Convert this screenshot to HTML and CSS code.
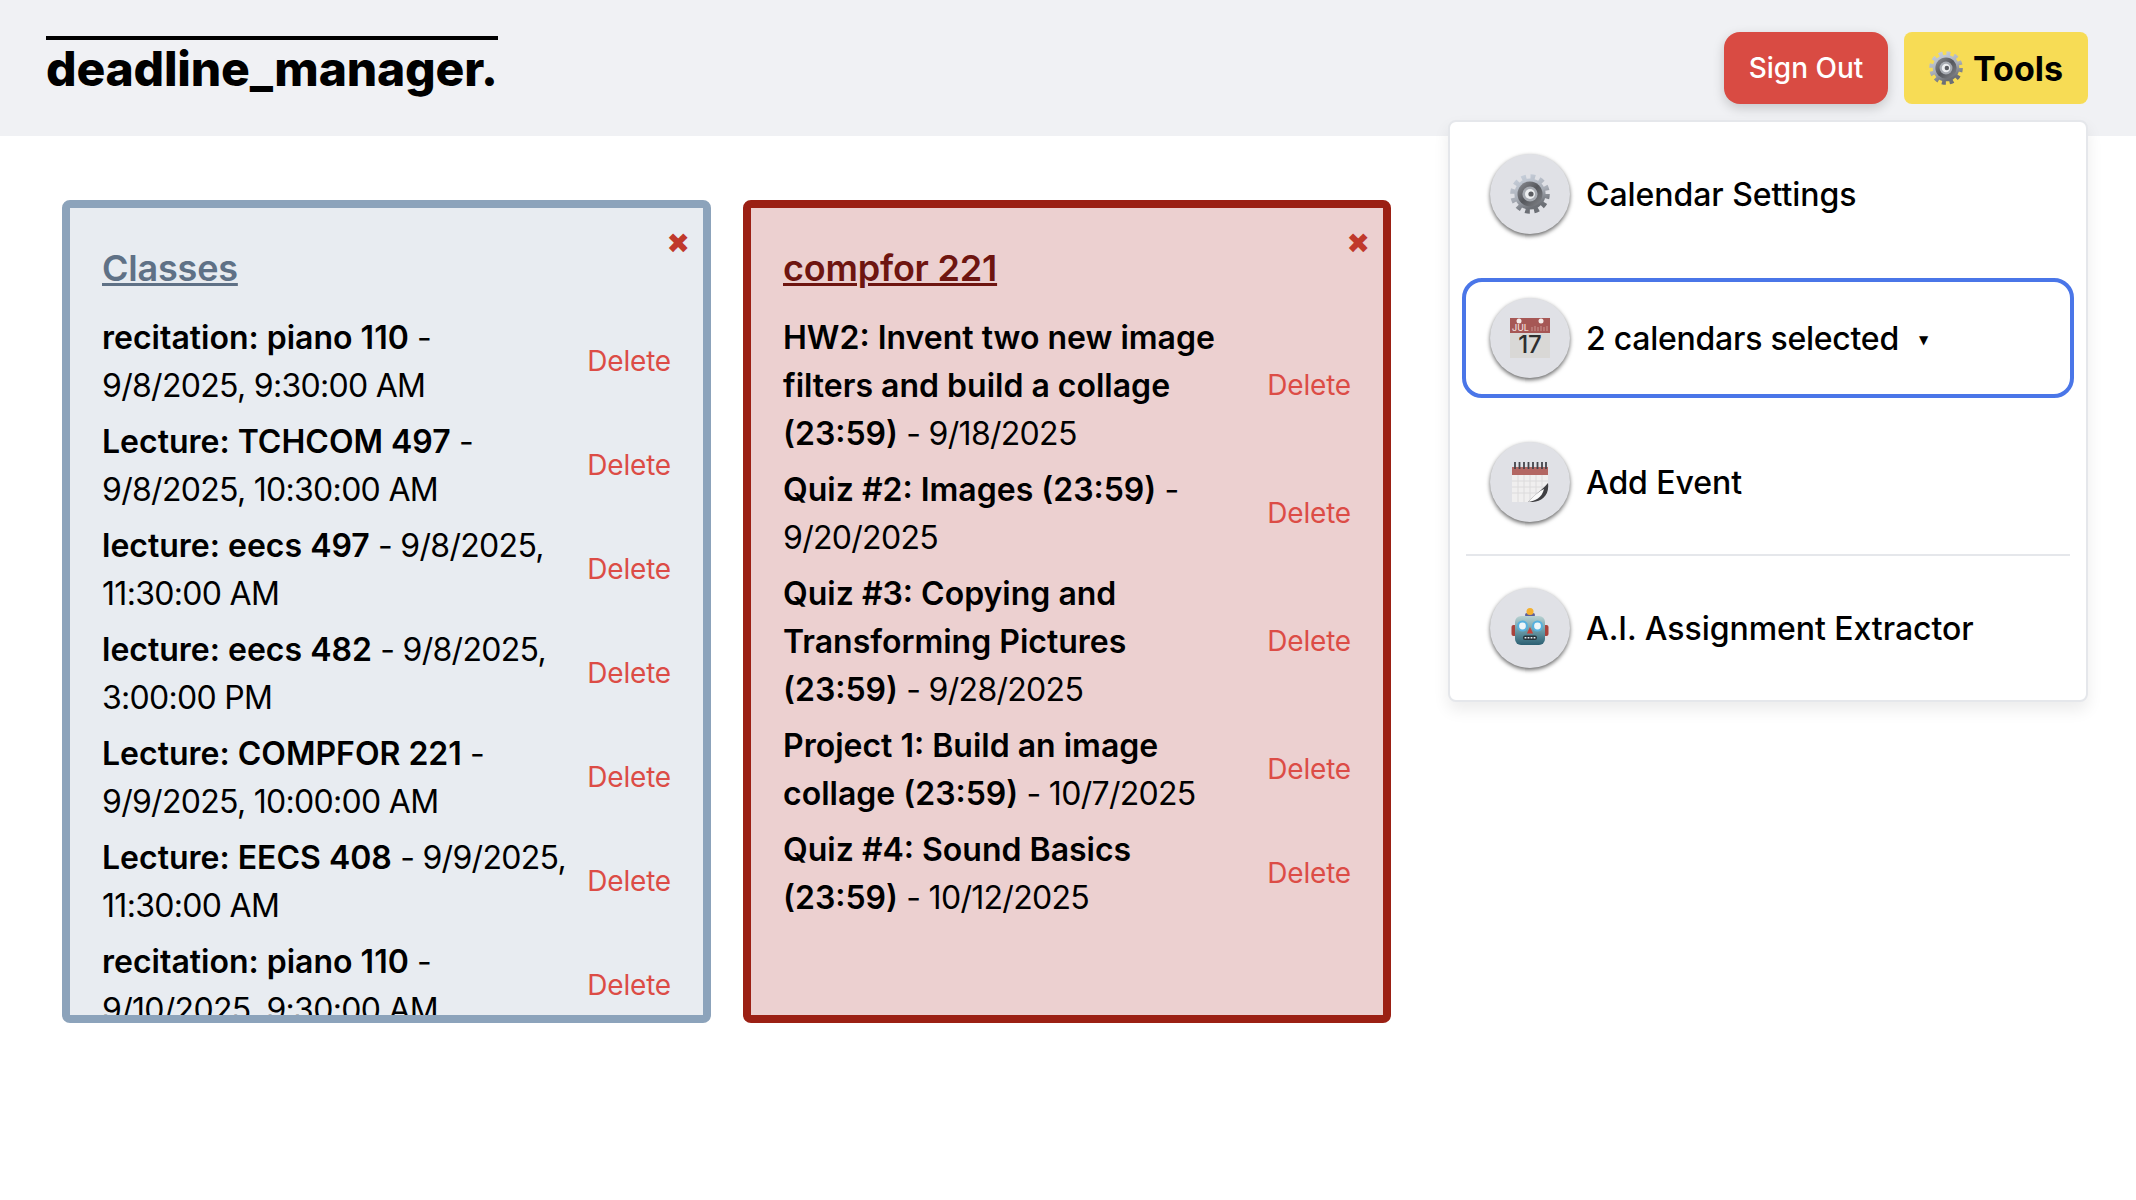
FILE: index.html
```html
<!DOCTYPE html>
<html lang="en">
<head>
    <meta charset="UTF-8">
    <title>deadline_manager.</title>
    <link rel="stylesheet" href="styles.css">
</head>
<body>
    <svg class="icon-defs" width="0" height="0" aria-hidden="true">
        <defs>
            <linearGradient id="gear-teeth" x1="0" y1="0" x2="0.4" y2="1">
                <stop offset="0" stop-color="#c9d1dd"/>
                <stop offset="0.6" stop-color="#a9aeb7"/>
                <stop offset="1" stop-color="#6c6f75"/>
            </linearGradient>
            <linearGradient id="gear-ring" x1="0" y1="0" x2="1" y2="1">
                <stop offset="0" stop-color="#8e9096"/>
                <stop offset="0.5" stop-color="#55575c"/>
                <stop offset="1" stop-color="#85878c"/>
            </linearGradient>
            <linearGradient id="robot-face" x1="0" y1="0" x2="0" y2="1">
                <stop offset="0" stop-color="#b9d2d2"/>
                <stop offset="0.5" stop-color="#6b9ca8"/>
                <stop offset="1" stop-color="#2b5f72"/>
            </linearGradient>
            <symbol id="gear" viewBox="0 0 40 40">
                <circle cx="20" cy="20" r="17" fill="none" stroke="url(#gear-teeth)" stroke-width="5.6" stroke-dasharray="4.6 4.3"/>
                <circle cx="20" cy="20" r="15.6" fill="url(#gear-teeth)"/>
                <circle cx="20" cy="20" r="12.5" fill="url(#gear-ring)"/>
                <circle cx="20" cy="20" r="7.6" fill="#a7abb2"/>
                <circle cx="20" cy="20" r="5" fill="#eceef0"/>
                <circle cx="21" cy="20" r="2.6" fill="#5a5c61"/>
            </symbol>
        </defs>
    </svg>

    <header class="top-bar">
        <h1 class="brand">deadline_manager.</h1>
        <div class="top-actions">
            <button class="btn-signout">Sign Out</button>
            <button class="btn-tools">
                <svg class="tools-gear"><use href="#gear"/></svg>
                Tools
            </button>
        </div>
    </header>

    <main class="boards">
        <section class="card card-blue">
            <span class="card-close">✖</span>
            <h2 class="card-title">Classes</h2>
            <div class="task">
                <p><b>recitation: piano 110</b> - 9/8/2025, 9:30:00 AM</p>
                <a class="task-delete">Delete</a>
            </div>
            <div class="task">
                <p><b>Lecture: TCHCOM 497</b> - 9/8/2025, 10:30:00 AM</p>
                <a class="task-delete">Delete</a>
            </div>
            <div class="task">
                <p><b>lecture: eecs 497</b> - 9/8/2025, 11:30:00 AM</p>
                <a class="task-delete">Delete</a>
            </div>
            <div class="task">
                <p><b>lecture: eecs 482</b> - 9/8/2025, 3:00:00 PM</p>
                <a class="task-delete">Delete</a>
            </div>
            <div class="task">
                <p><b>Lecture: COMPFOR 221</b> - 9/9/2025, 10:00:00 AM</p>
                <a class="task-delete">Delete</a>
            </div>
            <div class="task">
                <p><b>Lecture: EECS 408</b> - 9/9/2025, 11:30:00 AM</p>
                <a class="task-delete">Delete</a>
            </div>
            <div class="task">
                <p><b>recitation: piano 110</b> - 9/10/2025, 9:30:00 AM</p>
                <a class="task-delete">Delete</a>
            </div>
        </section>

        <section class="card card-red">
            <span class="card-close">✖</span>
            <h2 class="card-title">compfor 221</h2>
            <div class="task">
                <p><b>HW2: Invent two new image filters and build a collage (23:59)</b> - 9/18/2025</p>
                <a class="task-delete">Delete</a>
            </div>
            <div class="task">
                <p><b>Quiz #2: Images (23:59)</b> - 9/20/2025</p>
                <a class="task-delete">Delete</a>
            </div>
            <div class="task">
                <p><b>Quiz #3: Copying and Transforming Pictures (23:59)</b> - 9/28/2025</p>
                <a class="task-delete">Delete</a>
            </div>
            <div class="task">
                <p><b>Project 1: Build an image collage (23:59)</b> - 10/7/2025</p>
                <a class="task-delete">Delete</a>
            </div>
            <div class="task">
                <p><b>Quiz #4: Sound Basics (23:59)</b> - 10/12/2025</p>
                <a class="task-delete">Delete</a>
            </div>
        </section>
    </main>

    <div class="tools-menu">
        <div class="menu-row">
            <span class="menu-icon"><svg class="icon-gear"><use href="#gear"/></svg></span>
            Calendar Settings
        </div>
        <div class="menu-row menu-select">
            <span class="menu-icon">
                <svg class="icon-box" viewBox="0 0 40 40">
                    <rect x="0" y="0" width="40" height="40" fill="#d9d8d6"/>
                    <rect x="0" y="0" width="40" height="15" fill="#a65755"/>
                    <circle cx="9" cy="3" r="2.5" fill="#f4eceb"/>
                    <circle cx="31" cy="3" r="2.5" fill="#f4eceb"/>
                    <text x="2" y="13" class="cal-month">JUL</text>
                    <path d="M22 9v4M25 8v5M28 9v4M31 8v5M34 9v4M37 8v5" stroke="#bd7f7c" stroke-width="1.6"/>
                    <text x="20" y="35" text-anchor="middle" class="cal-day">17</text>
                </svg>
            </span>
            <span>2 calendars selected</span>
            <span class="select-caret">▼</span>
        </div>
        <div class="menu-row">
            <span class="menu-icon">
                <svg class="icon-box" viewBox="0 0 40 40">
                    <rect x="2" y="5" width="36" height="35" fill="#f0efef"/>
                    <rect x="2" y="5" width="36" height="8" fill="#b36763"/>
                    <path d="M5 0v7M9.500 0v7M14 0v7M18.500 0v7M23 0v7M27.500 0v7M32 0v7M36 0v7" stroke="#45454b" stroke-width="1.800"/>
                    <path d="M2 19h36M2 25h36M2 31h36M8 13v27M14 13v27M20 13v27M26 13v27M32 13v27" stroke="#dcdbdc" stroke-width="1"/>
                    <path d="M38 22V40H18Z" fill="#e0e1e6"/>
                    <path d="M38 21C35 25 27 31 18 40C28 41 40 36 38 21Z" fill="#3f3f42"/>
                    <path d="M34 27C29 29 24 34 18 40C25 39 32 36 34 27Z" fill="#fafafa"/>
                </svg>
            </span>
            Add Event
        </div>
        <div class="menu-divider"></div>
        <div class="menu-row">
            <span class="menu-icon">
                <svg class="icon-box" viewBox="0 0 40 40">
                    <rect x="1.500" y="17" width="5" height="11" rx="2" fill="#a9433c"/>
                    <rect x="33.500" y="17" width="5" height="11" rx="2" fill="#a9433c"/>
                    <rect x="15" y="5" width="10" height="4" rx="2" fill="#5b5f9b"/>
                    <circle cx="20" cy="3.500" r="3.500" fill="#f5b02e"/>
                    <rect x="5" y="8" width="30" height="29" rx="6" fill="url(#robot-face)"/>
                    <circle cx="12.500" cy="18" r="5.500" fill="#56b0de"/>
                    <circle cx="12.500" cy="18" r="3.400" fill="#eef6f8"/>
                    <circle cx="27.500" cy="18" r="5.500" fill="#56b0de"/>
                    <circle cx="27.500" cy="18" r="3.400" fill="#eef6f8"/>
                    <path d="M20 19l3.200 6.500h-6.400Z" fill="#c8433a"/>
                    <rect x="13" y="27.500" width="14" height="4.500" rx="2" fill="#26343c"/>
                    <path d="M15.500 29v1.500M18.500 29v1.500M21.500 29v1.500M24.500 29v1.500" stroke="#e9eef0" stroke-width="1.800"/>
                </svg>
            </span>
            A.I. Assignment Extractor
        </div>
    </div>
</body>
</html>
```

FILE: styles.css
```css
body {
    font-family: 'Inter', sans-serif;
    margin: 0;
    background-color: #fff;
    color: #000;
    height: 1200px;
    overflow: hidden;
    position: relative;
}

.icon-defs {
    position: absolute;
}

.top-bar {
    height: 136px;
    box-sizing: border-box;
    background-color: #f0f1f4;
    display: flex;
    justify-content: space-between;
    align-items: flex-start;
    padding: 32px 48px 0 46px;
}

.brand {
    margin: 4px 0 0;
    border-top: 4px solid #000;
    font-size: 48px;
    line-height: 58px;
    font-weight: 800;
    letter-spacing: -0.2px;
}

.top-actions {
    display: flex;
    gap: 16px;
}

.top-actions button {
    height: 72px;
    border: none;
    font-family: inherit;
    display: flex;
    align-items: center;
    justify-content: center;
}

.btn-signout {
    width: 164px;
    background-color: #d94b43;
    color: #fff;
    font-size: 28px;
    font-weight: 500;
    border-radius: 16px;
    box-shadow: 0 4px 12px rgba(0, 0, 0, 0.18);
}

.btn-tools {
    width: 184px;
    gap: 10px;
    background-color: #f7dc55;
    color: #000;
    font-size: 34px;
    font-weight: 700;
    border-radius: 8px;
}

.tools-gear {
    width: 34px;
    height: 34px;
}

.boards {
    display: flex;
    gap: 32px;
    padding: 64px 0 0 62px;
}

.card {
    position: relative;
    box-sizing: border-box;
    width: 648px;
    height: 823px;
    padding: 32px;
    border: 8px solid;
    border-radius: 8px;
    overflow: hidden;
}

.card-blue {
    width: 649px;
    background-color: #e8ecf1;
    border-color: #8ca3bb;
}

.card-blue .card-title {
    color: #5f7186;
}

.card-red {
    background-color: #ecd0d0;
    border-color: #9b2014;
}

.card-red .card-title {
    color: #6e1510;
}

.card-title {
    margin: 0 0 16px;
    font-size: 36px;
    line-height: 56px;
    font-weight: 600;
    letter-spacing: -0.2px;
    text-decoration: underline;
}

.card-close {
    position: absolute;
    top: 19px;
    right: 13px;
    font-family: 'DejaVu Sans', sans-serif;
    font-size: 28px;
    line-height: 34px;
    color: #c0392b;
}

.task {
    display: flex;
    align-items: center;
    justify-content: space-between;
    margin-bottom: 6px;
}

.task p {
    margin: 0;
    padding-top: 2px;
    width: 464px;
    font-size: 32px;
    line-height: 48px;
    letter-spacing: -0.7px;
}

.task b {
    font-weight: 600;
    letter-spacing: 0;
}

.task-delete {
    font-size: 28px;
    letter-spacing: -0.2px;
    color: #dc4c46;
}

.tools-menu {
    position: absolute;
    top: 120px;
    left: 1448px;
    width: 640px;
    box-sizing: border-box;
    padding: 0 14px;
    background-color: #fff;
    border: 2px solid #e5e7eb;
    border-radius: 8px;
    box-shadow: 0 8px 16px rgba(0, 0, 0, 0.08);
}

.menu-row {
    height: 144px;
    box-sizing: border-box;
    display: flex;
    align-items: center;
    gap: 16px;
    padding-left: 26px;
    font-size: 32px;
    font-weight: 500;
    letter-spacing: -0.05px;
}

.menu-select {
    height: 120px;
    margin: 12px -2px;
    padding-left: 24px;
    border: 4px solid #4a76e8;
    border-radius: 20px;
    letter-spacing: -0.25px;
}

.select-caret {
    font-family: 'DejaVu Sans', sans-serif;
    font-size: 12px;
    margin: 3px 0 0 4px;
}

.menu-divider {
    height: 2px;
    margin: 0 2px;
    background-color: #e5e7eb;
}

.menu-icon {
    width: 80px;
    height: 80px;
    flex: none;
    border-radius: 50%;
    background-color: #e0e1e6;
    box-shadow: 0 2px 4px rgba(0, 0, 0, 0.6);
    display: flex;
    align-items: center;
    justify-content: center;
}

.icon-gear,
.icon-box {
    width: 40px;
    height: 40px;
}

.cal-day {
    font-family: 'Inter', sans-serif;
    font-size: 24px;
    fill: #2e2e2e;
    letter-spacing: 0;
}

.cal-month {
    font-family: 'Inter', sans-serif;
    font-size: 9px;
    fill: #f0dcda;
    letter-spacing: 0;
}
```
